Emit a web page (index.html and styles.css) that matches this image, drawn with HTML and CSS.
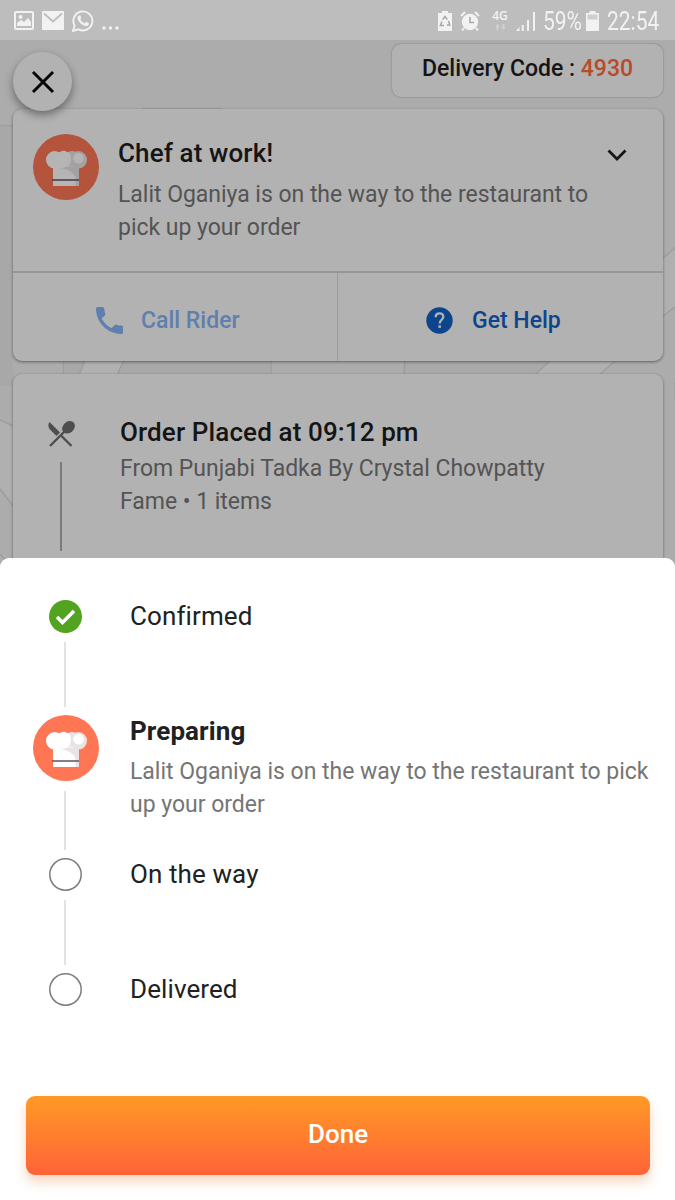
FILE: index.html
```html
<!DOCTYPE html>
<html lang="en">
<head>
    <meta charset="UTF-8">
    <meta name="viewport" content="width=device-width, initial-scale=1.0">
    <title>Order Tracking</title>
    <link rel="stylesheet" href="styles.css">
</head>
<body>
    <!-- Shared icons -->
    <svg class="sprite" width="0" height="0">
        <symbol id="chef" viewBox="0 0 66 66">
            <circle cx="33" cy="33" r="33" fill="#ff7654"/>
            <path d="M20 31h26v21H20z" fill="#fff"/>
            <circle cx="45.300" cy="25.800" r="8.700" fill="#e9e3e5"/>
            <circle cx="39" cy="24.500" r="7.500" fill="#e9e3e5"/>
            <path d="M27 34q6-1 9-2l10 2V52h-3.500V43q-3-7-15.500-9z" fill="#e9e3e5"/>
            <circle cx="21.700" cy="25.800" r="8.700" fill="#fff"/>
            <path d="M22 18q3 1 5 0 4-2.500 7 0 4 .5 4 6.500 0 9-8 9H21z" fill="#fff"/>
            <circle cx="45.500" cy="24.300" r="5.300" fill="#fff"/>
            <path d="M19 46h27" stroke="#62505d" stroke-width="1.500"/>
        </symbol>
    </svg>

    <div class="screen">
        <header class="status-bar">
            <div class="status-left">
                <svg width="20" height="20" viewBox="0 0 20 20">
                    <rect x="1" y="1" width="18" height="17" rx="1" fill="none" stroke="#f2f2f2" stroke-width="2"/>
                    <circle cx="6.500" cy="6" r="2" fill="#f2f2f2"/>
                    <path d="M3 15V12l4-3 3 2 4-4 3 4v4z" fill="#f2f2f2"/>
                </svg>
                <svg width="22" height="20" viewBox="0 0 22 20">
                    <rect x="0" y="0" width="22" height="19" rx="1" fill="#f2f2f2"/>
                    <path d="M2 2.500l9 8 9-8" fill="none" stroke="#bdbdbd" stroke-width="1.800"/>
                </svg>
                <svg width="22" height="22" viewBox="0 0 22 22">
                    <path d="M2.600 15.500A9.500 9.500 0 1 1 6.500 19.300L1 21z" fill="none" stroke="#f2f2f2" stroke-width="1.900"/>
                    <path d="M7 5.500q-2 1-1.500 3.200C6.500 12 9.500 15 13.500 16c2 .3 3.500-1 3.300-2.800l-2.800-1.400-1.400 1.600q-3-1.100-4.400-4.100l1.200-1.300L8.300 5.500z" fill="#f2f2f2"/>
                </svg>
                <svg class="dots" width="17" height="4" viewBox="0 0 17 4">
                    <circle cx="2" cy="2" r="1.700" fill="#f2f2f2"/>
                    <circle cx="8.500" cy="2" r="1.700" fill="#f2f2f2"/>
                    <circle cx="15" cy="2" r="1.700" fill="#f2f2f2"/>
                </svg>
            </div>
            <div class="status-right">
                <svg class="saver" width="14" height="20" viewBox="0 0 14 20">
                    <path d="M4 0h6v2h4v18H0V2h4z" fill="#f2f2f2"/>
                    <path d="M4.700 8.500L7 5.500l2.300 3M10.500 10l1.300 4H9M6 14.500H2.300L4 10.500" fill="none" stroke="#a6a6a6" stroke-width="1.400"/>
                </svg>
                <svg class="alarm" width="20" height="20" viewBox="0 0 20 20">
                    <circle cx="10" cy="11" r="8.200" fill="#f2f2f2"/>
                    <path d="M1 5L5 1M19 5l-4-4M4 17l-2 2.500M16 17l2 2.500" stroke="#f2f2f2" stroke-width="2"/>
                    <path d="M10 6v5.500h4" fill="none" stroke="#aaa" stroke-width="1.600"/>
                </svg>
                <div class="network">
                    <span>4G</span>
                    <svg width="11" height="6" viewBox="0 0 11 6">
                        <path d="M2.500 0L5 3H3.500v3h-2V3H0zM8.500 6L6 3h1.500V0h2v3H11z" fill="#d0d0d0"/>
                    </svg>
                </div>
                <svg class="signal" width="20" height="20" viewBox="0 0 20 20">
                    <path d="M0 20l3.500-4v4zM5.800 14h2v6h-2zM11 9h2v11h-2zM17 1h2v19h-2z" fill="#f2f2f2"/>
                </svg>
                <span class="percent">59%</span>
                <svg class="battery" width="13" height="20" viewBox="0 0 13 20">
                    <path d="M3.500 0h6v2H13v18H0V2h3.500z" fill="#f2f2f2"/>
                    <path d="M1.500 3.500h10v5h-10z" fill="#cfcfcf"/>
                </svg>
                <span class="clock">22:54</span>
            </div>
        </header>

        <main class="tracking">
            <svg class="map" width="675" height="528" viewBox="0 0 675 528">
                <rect width="675" height="528" fill="#acacac"/>
                <path d="M0 86h13v260H0zM63 320h208v15H63z" fill="#a8a8a8"/>
                <path d="M403 320h160l-15 16H403z" fill="#a9a9a9"/>
                <path d="M86 320h38l-7 15H79zM550 320h65l-16 15h-64z" fill="#b1b1b1"/>
                <path d="M663 219l12-10v57l-12 9zM0 381l13 6v77L0 447z" fill="#b0b0b0"/>
                <path d="M0 85.500h13M142 68.500h79M63.500 320v15M85 320l-6 15M124 320l-7 15M271 320v15M405 320l-1 15M550 321l-15 14M615 321l-16 14M663 218l12-10M663 276l12-9M675 342v18M0 380l13 6M0 449l13 17M0 514l13 15" fill="none" stroke="#9e9e9e" stroke-width="1.500"/>
            </svg>

            <div class="top-row">
                <button class="close-button" aria-label="Close">
                    <svg width="24" height="24" viewBox="0 0 24 24">
                        <path d="M2 2l20 20M22 2L2 22" stroke="#050505" stroke-width="3"/>
                    </svg>
                </button>
                <div class="delivery-code">Delivery Code : <span>4930</span></div>
            </div>

            <section class="card status-card">
                <div class="status-info">
                    <svg class="chef-icon" width="66" height="66"><use href="#chef"/></svg>
                    <div class="status-text">
                        <h2>Chef at work!</h2>
                        <p>Lalit Oganiya is on the way to the restaurant to<br>pick up your order</p>
                    </div>
                    <svg class="chevron" width="20" height="13" viewBox="0 0 20 13">
                        <path d="M1.500 1.500l8.500 8.500 8.500-8.500" fill="none" stroke="#151515" stroke-width="2.800"/>
                    </svg>
                </div>
                <div class="actions">
                    <div class="action call">
                        <svg width="27" height="27" viewBox="0 0 27 27">
                            <path d="M1.500 0H6.500Q8 0 8.200 1.500q.2 2.800 1 5 .4 1-.4 1.900L5.700 11.500q3.400 6.500 9.800 9.800l3.200-3.200q.8-.8 1.900-.4 2.300.8 4.900.9Q27 18.700 27 20.200V25.500q0 1.500-1.500 1.500C11.500 27 0 15.500 0 1.500Q0 0 1.500 0z" fill="#5f7fae"/>
                        </svg>
                        <span>Call Rider</span>
                    </div>
                    <div class="action help">
                        <svg width="27" height="27" viewBox="0 0 27 27">
                            <circle cx="13.500" cy="13.500" r="13.200" fill="#0d458c"/>
                            <path d="M9.700 10.200q0-3.900 3.800-3.900t3.800 3.500c0 3-3.600 3-3.600 6.600" fill="none" stroke="#b2b2b2" stroke-width="2.300"/>
                            <rect x="12.400" y="18.300" width="2.500" height="2.600" fill="#b2b2b2"/>
                        </svg>
                        <span>Get Help</span>
                    </div>
                </div>
            </section>

            <section class="card order-card">
                <div class="order-rail">
                    <svg width="27" height="27" viewBox="0 0 27 27">
                        <path d="M2 25L19 8M23.500 25L12 13.500" stroke="#4e4e4e" stroke-width="2.400"/>
                        <path d="M1.500 1l10.500 10.500-3.500 3.500L2 8.500Q-1 5 1.500 1z" fill="#4e4e4e"/>
                        <ellipse cx="20.500" cy="6.300" rx="7" ry="5.500" transform="rotate(-42 20.500 6.300)" fill="#4e4e4e"/>
                    </svg>
                    <div class="order-line"></div>
                </div>
                <div class="order-text">
                    <h2>Order Placed at 09:12 pm</h2>
                    <p>From Punjabi Tadka By Crystal Chowpatty<br>Fame • 1 items</p>
                </div>
            </section>
        </main>

        <section class="sheet">
            <div class="step confirmed">
                <div class="rail">
                    <svg width="33" height="33" viewBox="0 0 33 33">
                        <circle cx="16.500" cy="16.500" r="16.500" fill="#52a420"/>
                        <path d="M8 17l5.500 5.500L25 11" fill="none" stroke="#fff" stroke-width="3.500"/>
                    </svg>
                    <div class="line"></div>
                </div>
                <h3>Confirmed</h3>
            </div>
            <div class="step preparing">
                <div class="rail">
                    <svg width="66" height="66"><use href="#chef"/></svg>
                    <div class="line"></div>
                </div>
                <div>
                    <h3 class="active">Preparing</h3>
                    <p>Lalit Oganiya is on the way to the restaurant to pick<br>up your order</p>
                </div>
            </div>
            <div class="step on-the-way">
                <div class="rail">
                    <svg width="33" height="33" viewBox="0 0 33 33">
                        <circle cx="16.500" cy="16.500" r="15.700" fill="none" stroke="#7c7c7c" stroke-width="1.500"/>
                    </svg>
                    <div class="line"></div>
                </div>
                <h3>On the way</h3>
            </div>
            <div class="step delivered">
                <div class="rail">
                    <svg width="33" height="33" viewBox="0 0 33 33">
                        <circle cx="16.500" cy="16.500" r="15.700" fill="none" stroke="#7c7c7c" stroke-width="1.500"/>
                    </svg>
                </div>
                <h3>Delivered</h3>
            </div>
            <button class="done-button">Done</button>
        </section>
    </div>
</body>
</html>
```
FILE: styles.css
```css
* {
    box-sizing: border-box;
}

body {
    margin: 0;
    background-color: #acacac;
    font-family: Roboto, Arial, sans-serif;
}

h2, h3, p {
    margin: 0;
}

svg {
    display: block;
    flex-shrink: 0;
}

.sprite {
    position: absolute;
}

button {
    border: 0;
    padding: 0;
    font-family: inherit;
}

.screen {
    display: flex;
    flex-direction: column;
    width: 675px;
    height: 1200px;
    overflow: hidden;
}

/* Status bar */
.status-bar {
    display: flex;
    justify-content: space-between;
    flex-shrink: 0;
    height: 40px;
    padding: 0 16px 0 14px;
    background-color: #bdbdbd;
    color: #f2f2f2;
}

.status-left, .status-right {
    display: flex;
    align-items: center;
}

.status-left {
    gap: 8px;
    padding-top: 1px;
}

.dots {
    margin: 14px 0 0 0;
}

.saver, .alarm, .signal, .battery {
    margin-top: 1px;
}

.alarm {
    margin-left: 8px;
}

.network {
    display: flex;
    flex-direction: column;
    align-items: center;
    gap: 2px;
    width: 18px;
    margin-left: 11px;
    font: 600 12px/12px "Open Sans", sans-serif;
}

.signal {
    margin-left: 7px;
}

.percent, .clock {
    font-size: 25px;
    line-height: 40px;
    padding-top: 4px;
    transform-origin: left;
}

.percent {
    width: 39px;
    margin-left: 7px;
    transform: scaleX(0.84);
}

.battery {
    margin-left: 4px;
}

.clock {
    width: 52px;
    margin-left: 8px;
    transform: scaleX(0.84);
}

/* Live tracking */
.tracking {
    position: relative;
    flex-shrink: 0;
    height: 518px;
    padding: 4px 12px 0 13px;
}

.map {
    position: absolute;
    top: 0;
    left: 0;
}

.top-row {
    position: relative;
    z-index: 2;
    display: flex;
    justify-content: space-between;
    height: 65px;
}

.close-button {
    display: flex;
    align-items: center;
    justify-content: center;
    width: 59px;
    height: 59px;
    margin-top: 8px;
    border-radius: 50%;
    background-color: #b2b2b2;
    box-shadow: 0 4px 9px rgba(0, 0, 0, 0.4);
}

.delivery-code {
    width: 271px;
    height: 53px;
    border-radius: 9px;
    background-color: #b2b2b2;
    box-shadow: 0 0 2px rgba(0, 0, 0, 0.35);
    color: #151515;
    font-size: 23px;
    font-weight: 500;
    line-height: 50px;
    text-align: center;
}

.delivery-code span {
    color: #b74b2c;
}

.card {
    position: relative;
    border-radius: 9px;
    background-color: #b2b2b2;
    box-shadow: 0 1px 3px rgba(0, 0, 0, 0.45);
}

.card h2 {
    color: #151515;
    font-size: 26px;
    font-weight: 500;
    line-height: 34px;
    letter-spacing: 0.12px;
}

.card p {
    color: #545454;
    font-size: 23px;
    line-height: 33px;
    letter-spacing: -0.03px;
}

.status-card {
    height: 252px;
}

.status-info {
    display: flex;
    height: 162px;
    padding: 25px 36px 0 20px;
}

.chef-icon {
    filter: brightness(0.71);
}

.status-text {
    flex: 1;
    margin: 2px 0 0 19px;
    white-space: nowrap;
}

.status-text p {
    margin-top: 8px;
}

.chevron {
    margin-top: 15px;
}

.actions {
    display: grid;
    grid-template-columns: 1fr 1fr;
    height: 90px;
    border-top: 2px solid #979797;
}

.action {
    display: flex;
    align-items: center;
    font-size: 23px;
    font-weight: 500;
    padding-top: 7px;
}

.call {
    gap: 18px;
    padding-left: 83px;
    border-right: 1px solid #9c9c9c;
    color: #5f7fae;
}

.help {
    gap: 19px;
    padding-left: 88px;
    color: #0d458c;
}

.order-card {
    display: flex;
    gap: 45px;
    height: 220px;
    margin-top: 13px;
    padding: 41px 20px 0 35px;
    clip-path: inset(-4px -4px 26px -4px);
}

.order-rail {
    width: 27px;
    padding-top: 6px;
}

.order-line {
    width: 2px;
    height: 89px;
    margin: 14px 0 0 12px;
    background-color: #7a7a7a;
}

.order-text p {
    margin-top: 3px;
}

/* Bottom sheet */
.sheet {
    position: relative;
    flex: 1;
    padding: 42px 25px 0 26px;
    border-radius: 9px 9px 0 0;
    background-color: #fff;
}

.step {
    display: flex;
    gap: 25px;
    color: #212121;
    white-space: nowrap;
}

.rail {
    display: flex;
    flex-direction: column;
    align-items: center;
    width: 79px;
}

.line {
    width: 2px;
    height: 65px;
    margin: 9px 1px 0 0;
    background-color: #e2e2e2;
}

.step h3 {
    font-size: 26px;
    font-weight: 400;
    line-height: 33px;
    letter-spacing: 0.1px;
}

.step .active {
    font-weight: 700;
}

.step p {
    margin-top: 7px;
    color: #757575;
    font-size: 23px;
    line-height: 33px;
    letter-spacing: -0.02px;
}

.confirmed, .on-the-way {
    height: 115px;
}

.preparing {
    height: 143px;
}

.preparing .line {
    height: 59px;
    margin-top: 10px;
}

.delivered {
    height: 123px;
}

.done-button {
    display: block;
    width: 624px;
    height: 79px;
    padding-bottom: 3px;
    border-radius: 9px;
    background: linear-gradient(#ff9a26, #ff6338);
    box-shadow: 0 7px 12px rgba(220, 130, 60, 0.32);
    color: #fff;
    font-size: 26px;
    font-weight: 500;
}
```
